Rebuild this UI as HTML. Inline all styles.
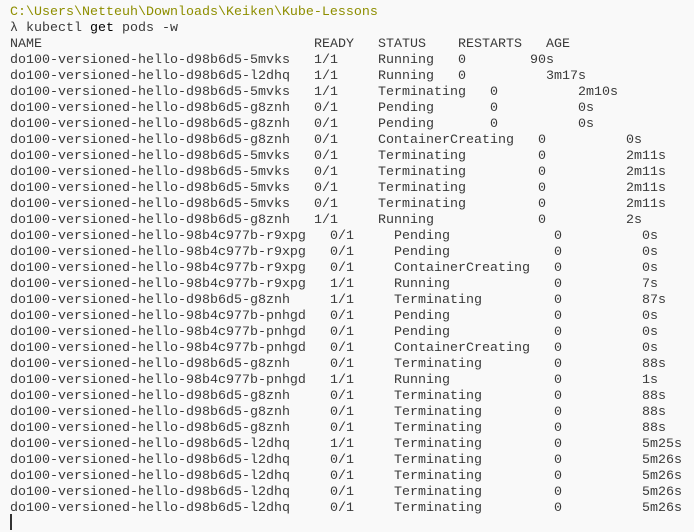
<!DOCTYPE html>
<html><head><meta charset="utf-8">
<style>
html,body{margin:0;padding:0;background:#f9f9f9;width:694px;height:532px;overflow:hidden}
body{font-family:"Liberation Mono",monospace;font-size:13.33px;color:#3a3a3a}
.r{position:absolute;height:16px;line-height:16px;left:0;width:694px;white-space:pre}
.r span{position:absolute;top:0}
.cur{position:absolute;left:10px;top:514px;width:2px;height:16px;background:#333}
</style></head><body>
<div class="r" style="top:5px;color:#8e8e00"><span style="left:10px">C:\Users\Netteuh\Downloads\Keiken\Kube-Lessons</span></div>
<div class="r" style="top:21px"><span style="left:10px">λ kubectl <span style="position:static;color:#000">get</span> pods -w</span></div>
<div id="rows"></div>
<div class="cur"></div>
<script>
var D=[
["NAME",10,"READY",314,"STATUS",378,"RESTARTS",458,"AGE",546],
["do100-versioned-hello-d98b6d5-5mvks",10,"1/1",314,"Running",378,"0",458,"90s",530],
["do100-versioned-hello-d98b6d5-l2dhq",10,"1/1",314,"Running",378,"0",458,"3m17s",546],
["do100-versioned-hello-d98b6d5-5mvks",10,"1/1",314,"Terminating",378,"0",490,"2m10s",578],
["do100-versioned-hello-d98b6d5-g8znh",10,"0/1",314,"Pending",378,"0",490,"0s",578],
["do100-versioned-hello-d98b6d5-g8znh",10,"0/1",314,"Pending",378,"0",490,"0s",578],
["do100-versioned-hello-d98b6d5-g8znh",10,"0/1",314,"ContainerCreating",378,"0",538,"0s",626],
["do100-versioned-hello-d98b6d5-5mvks",10,"0/1",314,"Terminating",378,"0",538,"2m11s",626],
["do100-versioned-hello-d98b6d5-5mvks",10,"0/1",314,"Terminating",378,"0",538,"2m11s",626],
["do100-versioned-hello-d98b6d5-5mvks",10,"0/1",314,"Terminating",378,"0",538,"2m11s",626],
["do100-versioned-hello-d98b6d5-5mvks",10,"0/1",314,"Terminating",378,"0",538,"2m11s",626],
["do100-versioned-hello-d98b6d5-g8znh",10,"1/1",314,"Running",378,"0",538,"2s",626]
];
var L=[
["98b4c977b-r9xpg","0/1","Pending","0s"],
["98b4c977b-r9xpg","0/1","Pending","0s"],
["98b4c977b-r9xpg","0/1","ContainerCreating","0s"],
["98b4c977b-r9xpg","1/1","Running","7s"],
["d98b6d5-g8znh","1/1","Terminating","87s"],
["98b4c977b-pnhgd","0/1","Pending","0s"],
["98b4c977b-pnhgd","0/1","Pending","0s"],
["98b4c977b-pnhgd","0/1","ContainerCreating","0s"],
["d98b6d5-g8znh","0/1","Terminating","88s"],
["98b4c977b-pnhgd","1/1","Running","1s"],
["d98b6d5-g8znh","0/1","Terminating","88s"],
["d98b6d5-g8znh","0/1","Terminating","88s"],
["d98b6d5-g8znh","0/1","Terminating","88s"],
["d98b6d5-l2dhq","1/1","Terminating","5m25s"],
["d98b6d5-l2dhq","0/1","Terminating","5m26s"],
["d98b6d5-l2dhq","0/1","Terminating","5m26s"],
["d98b6d5-l2dhq","0/1","Terminating","5m26s"],
["d98b6d5-l2dhq","0/1","Terminating","5m26s"]
];
L.forEach(function(x){D.push(["do100-versioned-hello-"+x[0],10,x[1],330,x[2],394,"0",554,x[3],642]);});
var h="";
D.forEach(function(r,i){
 h+='<div class="r" style="top:'+(37+16*i)+'px">';
 for(var k=0;k<r.length;k+=2)h+='<span style="left:'+r[k+1]+'px">'+r[k]+'</span>';
 h+='</div>';
});
document.getElementById("rows").innerHTML=h;
</script>
</body></html>
